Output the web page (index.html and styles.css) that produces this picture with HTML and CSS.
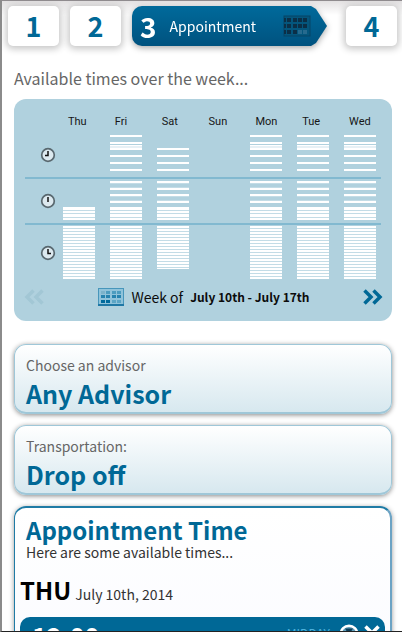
FILE: index.html
```html
<!DOCTYPE html>
<html lang="en">
<head>
<meta charset="utf-8">
<meta name="viewport" content="width=device-width, initial-scale=1">
<title>Appointment</title>
<link rel="stylesheet" href="styles.css">
</head>
<body>
<svg class="defs" aria-hidden="true">
  <defs>
    <pattern id="stripes" width="32" height="3" patternUnits="userSpaceOnUse" y="1">
      <rect width="32" height="2" fill="#fff"/>
      <rect y="2" width="32" height="1" fill="#c3dce6"/>
    </pattern>
    <g id="morning-late" fill="#fff">
      <path d="M0 16h32v2H0zM0 23h32v2H0zM0 30h32v2H0zM0 37h32v2H0z"/>
    </g>
    <g id="morning" fill="#fff">
      <path d="M0 3h32v2H0zM0 10h32v2H0z"/>
      <path d="M0 13h32v3H0z" fill="#e6f0f5"/>
      <path d="M0 13h32v1H0z"/>
      <use href="#morning-late"/>
    </g>
    <g id="noon-late" fill="#fff">
      <path d="M0 28h32v13H0z"/>
      <path d="M0 31h32v1H0zM0 34h32v1H0zM0 38h32v1H0z" fill="#c3dce6"/>
    </g>
    <g id="noon" fill="#fff">
      <path d="M0 2h32v2H0zM0 9h32v2H0zM0 15h32v2H0zM0 22h32v2H0z"/>
      <path d="M0 4h32v1H0zM0 8h32v1H0zM0 17h32v1H0zM0 21h32v1H0z" fill="#c3dce6"/>
      <use href="#noon-late"/>
    </g>
    <rect id="evening" y="1" width="32" height="53" fill="url(#stripes)"/>
    <rect id="evening-short" y="1" width="32" height="43" fill="url(#stripes)"/>
    <g id="clock-face">
      <circle cx="8" cy="8" r="6.3" fill="#dce9ef" stroke="#59686f" stroke-width="1.7"/>
    </g>
  </defs>
</svg>
<div class="app">
  <nav class="steps" aria-label="Steps">
    <a class="step" href="#step-1">1</a>
    <a class="step" href="#step-2">2</a>
    <a class="step-current" href="#step-3" aria-current="step">
      <span class="arrow">
        <span class="arrow-number">3</span>
        <span class="arrow-label">Appointment</span>
        <svg class="arrow-icon" viewBox="0 0 28 22" aria-hidden="true">
          <rect x="1" y="1" width="26" height="20" fill="#04567d" stroke="#064566"/>
          <g fill="#0b2f47">
            <path d="M1 3h2v4H1zM4 3h4v4H4zM10 3h4v4h-4zM15 3h4v4h-4zM20 3h4v4h-4zM1 9h2v4H1zM4 9h4v4H4zM10 9h4v4h-4zM15 9h4v4h-4zM20 9h4v4h-4zM1 15h2v4H1zM4 15h4v4H4zM10 15h4v4h-4z"/>
          </g>
          <path d="M15 15h4v4h-4zM20 15h4v4h-4z" fill="#266a8e"/>
        </svg>
      </span>
    </a>
    <a class="step step-last" href="#step-4">4</a>
  </nav>

  <main class="content">
    <h1 class="page-title">Available times over the week...</h1>

    <section class="week">
      <table class="grid">
        <thead>
          <tr><td class="time-col"></td><th>Thu</th><th>Fri</th><th>Sat</th><th>Sun</th><th>Mon</th><th>Tue</th><th>Wed</th></tr>
        </thead>
        <tbody>
          <tr class="ruled">
            <th class="time-col"><svg class="clock" viewBox="0 0 16 16" role="img" aria-label="Morning"><use href="#clock-face"/><path d="M8 4v4.5H5" fill="none" stroke="#111" stroke-width="1.5"/></svg></th>
            <td></td>
            <td><svg class="bars morning"><use href="#morning"/></svg></td>
            <td><svg class="bars morning"><use href="#morning-late"/></svg></td>
            <td></td>
            <td><svg class="bars morning"><use href="#morning"/></svg></td>
            <td><svg class="bars morning"><use href="#morning"/></svg></td>
            <td><svg class="bars morning"><use href="#morning"/></svg></td>
          </tr>
          <tr class="ruled">
            <th class="time-col"><svg class="clock" viewBox="0 0 16 16" role="img" aria-label="Midday"><use href="#clock-face"/><path d="M8 4v5" fill="none" stroke="#111" stroke-width="1.5"/></svg></th>
            <td><svg class="bars noon"><use href="#noon-late"/></svg></td>
            <td><svg class="bars noon"><use href="#noon"/></svg></td>
            <td><svg class="bars noon"><use href="#noon"/></svg></td>
            <td></td>
            <td><svg class="bars noon"><use href="#noon"/></svg></td>
            <td><svg class="bars noon"><use href="#noon"/></svg></td>
            <td><svg class="bars noon"><use href="#noon"/></svg></td>
          </tr>
          <tr>
            <th class="time-col"><svg class="clock" viewBox="0 0 16 16" role="img" aria-label="Afternoon"><use href="#clock-face"/><path d="M8 4v4.5h3" fill="none" stroke="#111" stroke-width="1.5"/></svg></th>
            <td><svg class="bars evening"><use href="#evening"/></svg></td>
            <td><svg class="bars evening"><use href="#evening"/></svg></td>
            <td><svg class="bars evening"><use href="#evening-short"/></svg></td>
            <td></td>
            <td><svg class="bars evening"><use href="#evening"/></svg></td>
            <td><svg class="bars evening"><use href="#evening"/></svg></td>
            <td><svg class="bars evening"><use href="#evening"/></svg></td>
          </tr>
        </tbody>
      </table>
      <div class="week-nav">
        <button class="arrow-button" type="button" aria-label="Previous week" disabled>
          <svg viewBox="0 0 20 16"><path d="M8.500 1.500 2 8l6.500 6.500M17.500 1.500 11 8l6.500 6.500" fill="none" stroke="#a2c7d5" stroke-width="3.500"/></svg>
        </button>
        <div class="week-range">
          <svg class="calendar" viewBox="0 0 26 18" aria-hidden="true">
            <rect x=".5" y=".5" width="25" height="17" fill="#8fc3da" stroke="#4796bb"/>
            <path d="M0 17h26" stroke="#1f78a5" stroke-width="2"/>
            <path d="M3 3h4v3H3z" fill="#7bb3cb"/>
            <path d="M8 3h4v3H8zM14 3h4v3h-4zM19 3h4v3h-4z" fill="#4b9cbf"/>
            <path d="M3 7h4v3H3zM8 7h4v3H8zM14 7h4v3h-4zM19 7h4v3h-4z" fill="#2583af"/>
            <path d="M3 12h4v3H3zM8 12h4v3H8z" fill="#006a9c"/>
            <path d="M14 12h4v3h-4zM19 12h4v3h-4z" fill="#5ba5c5"/>
          </svg>
          <span class="week-label">Week of</span>
          <strong class="week-dates">July 10th - July 17th</strong>
        </div>
        <button class="arrow-button" type="button" aria-label="Next week">
          <svg viewBox="0 0 20 16"><path d="M3.500 1.500 10 8l-6.500 6.500M12.500 1.500 19 8l-6.500 6.500" fill="none" stroke="#006896" stroke-width="3.500"/></svg>
        </button>
      </div>
    </section>

    <button class="field" type="button">
      <span class="field-label">Choose an advisor</span>
      <span class="field-value">Any Advisor</span>
    </button>
    <button class="field" type="button">
      <span class="field-label">Transportation:</span>
      <span class="field-value">Drop off</span>
    </button>

    <section class="times">
      <h2 class="times-title">Appointment Time</h2>
      <p class="times-note">Here are some available times...</p>
      <h3 class="day"><span class="day-name">THU</span> <span class="day-date">July 10th, 2014</span></h3>
      <button class="slot" type="button">
        <span class="slot-time">12:00</span>
        <span class="slot-period">MIDDAY</span>
        <svg class="slot-clock" viewBox="0 0 20 20" aria-hidden="true"><circle cx="10" cy="10" r="8.300" fill="#5e9db9" stroke="#fff" stroke-width="2.400"/><path d="M6 4.500h8L10 11z" fill="#0b3c57"/></svg>
        <svg class="slot-close" viewBox="0 0 16 16" aria-hidden="true"><path d="M1.500 1.500l13 13M14.500 1.500l-13 13" stroke="#fff" stroke-width="3.500"/></svg>
      </button>
    </section>
  </main>
</div>
</body>
</html>
```
FILE: styles.css
```css
* {
  box-sizing: border-box;
}

body,
h1,
h2,
h3,
p {
  margin: 0;
}

body {
  font-family: "Noto Sans CJK SC", "Open Sans", sans-serif;
  background: #fff;
}

button {
  font: inherit;
  border: 0;
  padding: 0;
  background: none;
  text-align: left;
}

svg {
  display: block;
  overflow: visible;
}

.defs {
  position: absolute;
  width: 0;
  height: 0;
}

.app {
  height: 100vh;
  overflow: hidden;
  border-top: 1px solid #8f8b8e;
  border-left: 2px solid #8b8b8b;
  border-bottom: 1px solid #222;
}

.steps {
  display: flex;
  gap: 11px;
  padding: 5px 5px 0 6px;
  background: linear-gradient(#e3e1e2, #fff 14px);
}

.step {
  flex: none;
  width: 51px;
  height: 40px;
  border-radius: 5px;
  background: #fff;
  box-shadow: 0 1px 7px 2px #c6c6c6;
  color: #006896;
  font-size: 27px;
  font-weight: 700;
  line-height: 40px;
  text-align: center;
  text-decoration: none;
}

.step-last {
  margin-left: 8px;
}

.step-current {
  flex: 1;
  filter: drop-shadow(0 2px 3px #aaa);
  color: #fff;
  text-decoration: none;
}

.arrow {
  display: flex;
  align-items: center;
  height: 40px;
  padding: 0 16px 0 8px;
  border-radius: 10px 0 0 10px;
  background: linear-gradient(#006a9b, #00527f);
  clip-path: polygon(0 0, calc(100% - 16px) 0, calc(100% - 11px) 3px, 100% 50%, calc(100% - 11px) 37px, calc(100% - 16px) 100%, 0 100%);
}

.arrow-number {
  font-size: 28px;
  font-weight: 700;
  line-height: 40px;
}

.arrow-label {
  margin-left: 13px;
  font-size: 14px;
  line-height: 40px;
}

.arrow-icon {
  width: 28px;
  height: 22px;
  margin-left: auto;
}

.content {
  display: flex;
  flex-direction: column;
  padding: 20px 10px 0 12px;
}

.page-title {
  color: #666;
  font-size: 16px;
  font-weight: 400;
  line-height: 24px;
}

.week {
  margin-top: 9px;
  padding: 13px 11px 10px;
  border-radius: 12px;
  background: #b0d1de;
}

.grid {
  width: 100%;
  border-collapse: collapse;
  table-layout: fixed;
}

.grid th,
.grid td {
  padding: 0;
}

.grid thead th {
  height: 20px;
  padding-left: 15px;
  color: #161616;
  font-family: Roboto, sans-serif;
  font-size: 11px;
  font-weight: 400;
  line-height: 20px;
  text-align: left;
  vertical-align: top;
}

.time-col {
  width: 28px;
}

.clock {
  width: 16px;
  height: 16px;
  margin-left: 15px;
}

.bars {
  width: 32px;
  margin: 0 5px 0 auto;
}

.morning {
  height: 45px;
}

.noon {
  height: 44px;
}

.evening {
  height: 55px;
}

.ruled td,
.ruled th {
  border-bottom: 2px solid #82b9d0;
}

.week-nav {
  display: flex;
  align-items: center;
  justify-content: space-between;
  height: 28px;
  margin-top: 3px;
}

.arrow-button svg {
  width: 20px;
  height: 16px;
}

.week-range {
  display: flex;
  align-items: center;
  gap: 7px;
  margin-left: 2px;
  color: #0b0b0b;
  line-height: 20px;
}

.calendar {
  width: 26px;
  height: 18px;
}

.week-label {
  font-size: 14px;
}

.week-dates {
  font-size: 12px;
}

.field {
  display: flex;
  flex-direction: column;
  width: 100%;
  margin-top: 11px;
  padding: 9px 11px 2px;
  border: 1px solid #9fc7d8;
  border-bottom-width: 2px;
  border-radius: 12px;
  background: linear-gradient(#fff, #d7e8ef);
  box-shadow: 0 1px 5px #888;
}

.week + .field {
  margin-top: 23px;
}

.field-label {
  color: #666;
  font-size: 14px;
  line-height: 22px;
}

.field-value {
  color: #006896;
  font-size: 25px;
  font-weight: 700;
  line-height: 34px;
}

.times {
  margin-top: 11px;
  padding: 9px 5px 12px;
  border: 1px solid #1f7ba5;
  border-top-width: 2px;
  border-right: 2px solid #6ca3c4;
  border-radius: 12px;
  background: linear-gradient(#fff, #fafbff);
  box-shadow: 0 1px 5px #999;
}

.times-title {
  padding-left: 6px;
  color: #006896;
  font-size: 24px;
  font-weight: 700;
  line-height: 26px;
}

.times-note {
  padding-left: 6px;
  color: #333;
  font-size: 14px;
  line-height: 18px;
}

.day {
  margin-top: 13px;
  color: #333;
  font-size: 18px;
  font-weight: 400;
  line-height: 32px;
}

.day-name {
  color: #000;
  font-size: 24px;
  font-weight: 700;
}

.day-date {
  font-size: 14px;
}

.slot {
  display: flex;
  align-items: flex-start;
  width: 100%;
  height: 40px;
  margin-top: 7px;
  padding: 3px 5px 0 12px;
  border-radius: 10px;
  background: #006896;
  color: #fff;
}

.slot-time {
  font-size: 25px;
  font-weight: 700;
  line-height: 30px;
}

.slot-period {
  margin: 3px 9px 0 auto;
  color: #4bb0dc;
  font-size: 12px;
  line-height: 20px;
}

.slot-clock {
  width: 20px;
  height: 20px;
  margin-top: 4px;
}

.slot-close {
  width: 16px;
  height: 16px;
  margin: 5px 0 0 5px;
}
```
